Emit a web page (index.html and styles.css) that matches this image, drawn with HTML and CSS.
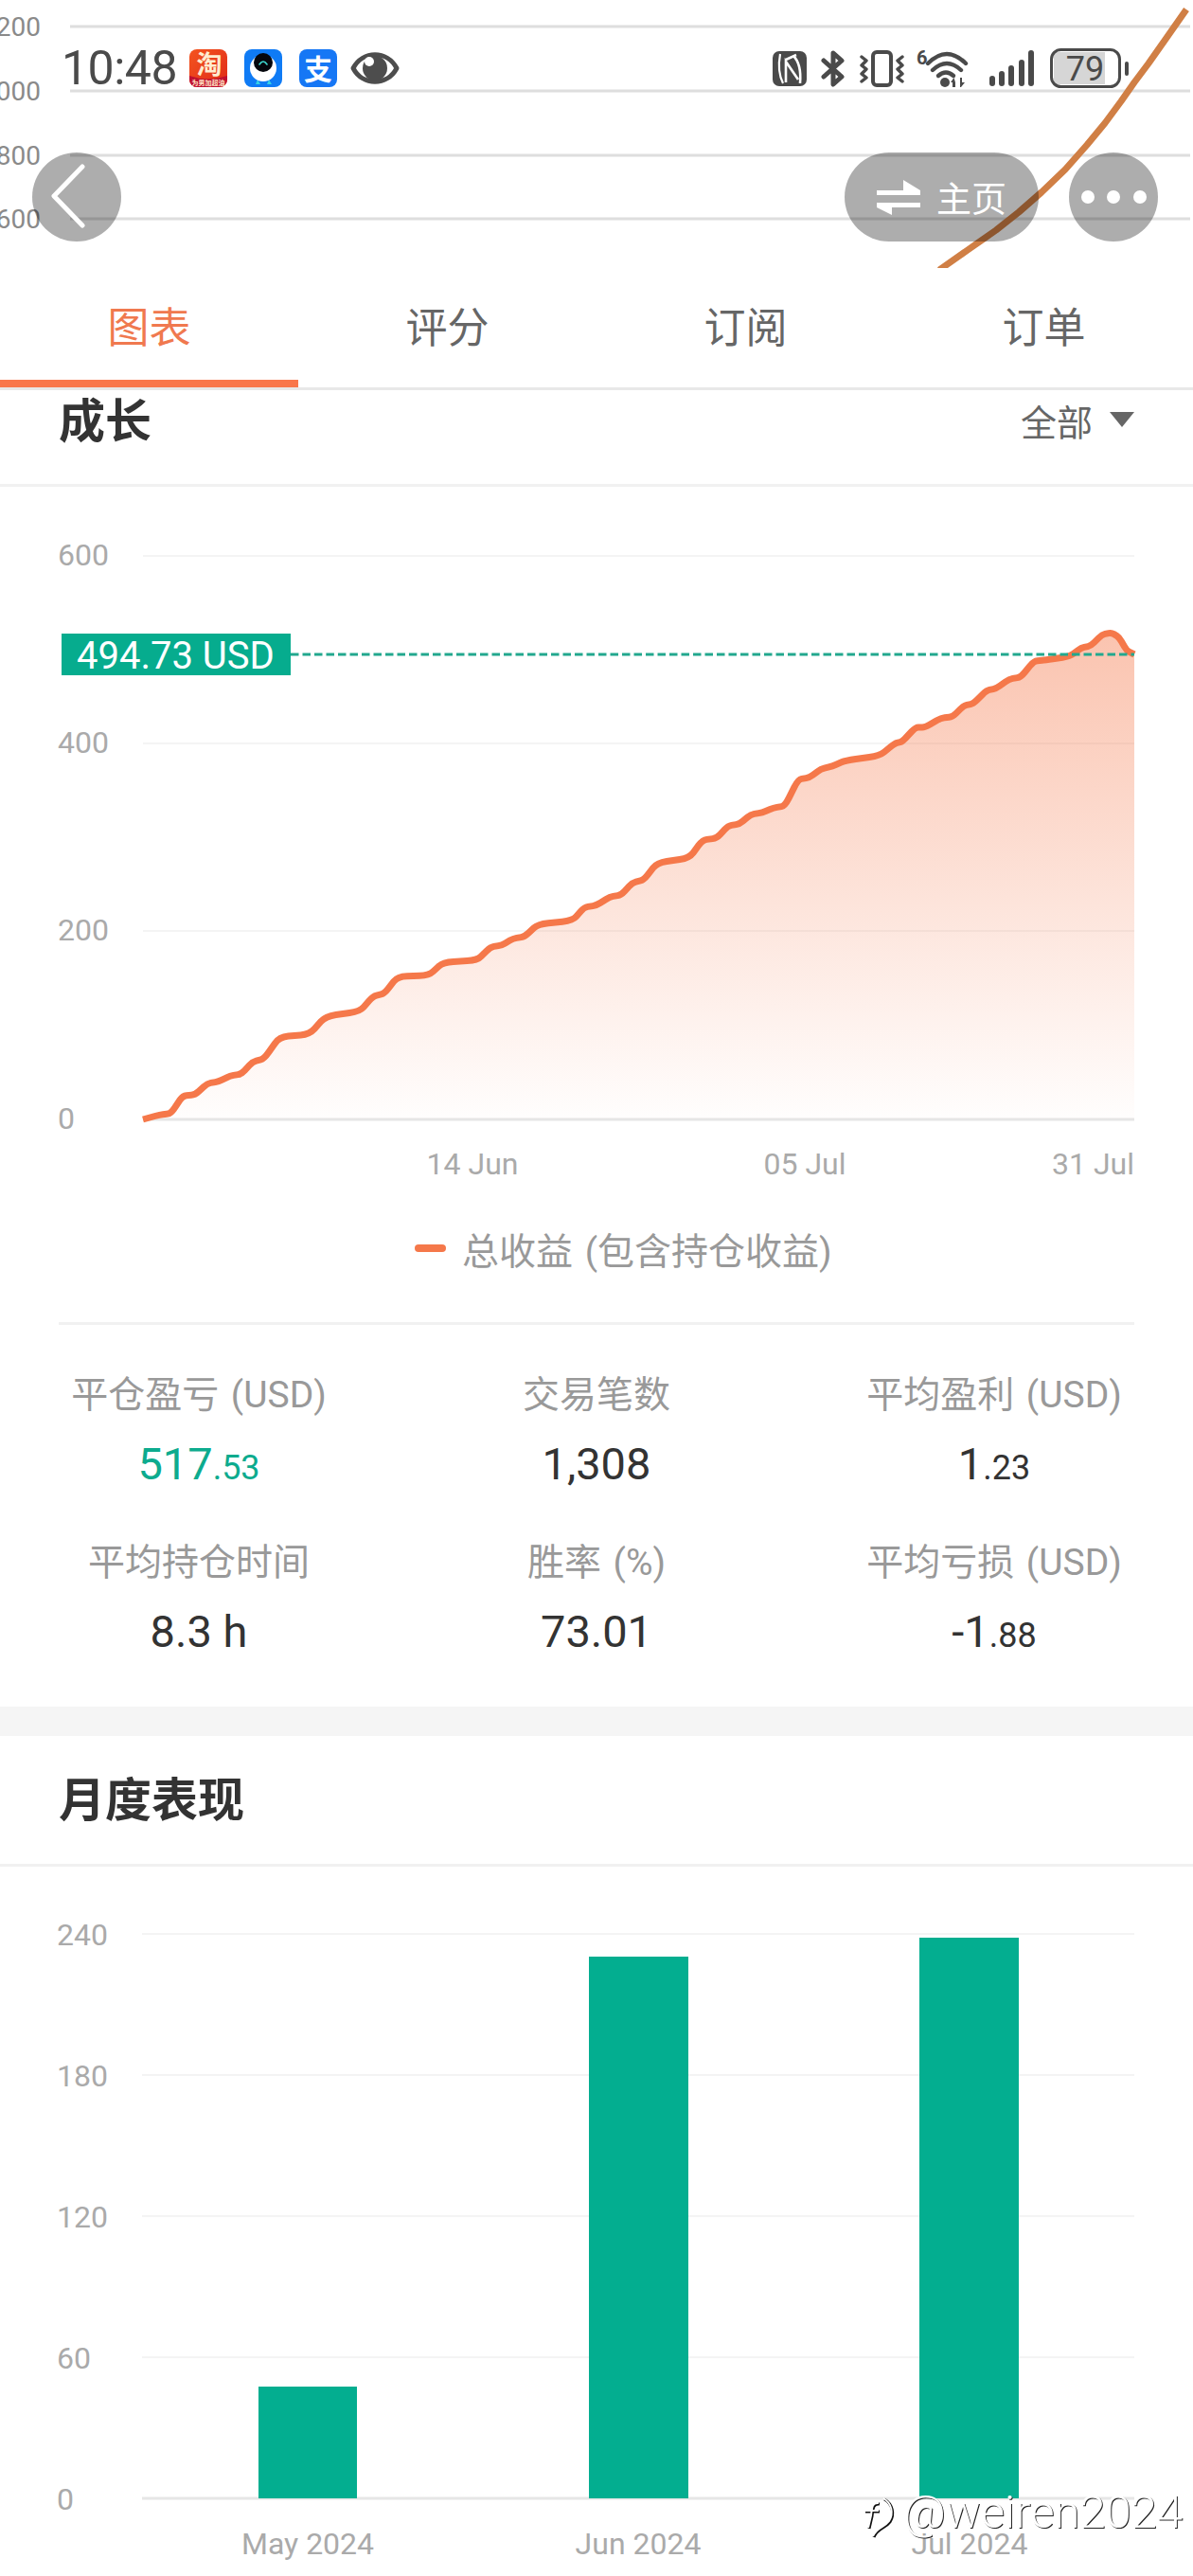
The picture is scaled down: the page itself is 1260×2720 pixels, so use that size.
FILE: index.html
```html
<!DOCTYPE html>
<html lang="zh-CN">
<head>
  <meta charset="UTF-8" />
  <title>图表</title>
  <link rel="stylesheet" href="styles.css">
</head>
<body>
  <div class="screen">

    <header class="top">
      <svg class="backdrop" viewBox="0 0 1260 283">
        <g class="bg-grid">
          <line x1="74" y1="28" x2="1257" y2="28" />
          <line x1="74" y1="96" x2="1257" y2="96" />
          <line x1="74" y1="164" x2="1257" y2="164" />
          <line x1="74" y1="231" x2="1257" y2="231" />
        </g>
        <g class="bg-label">
          <text x="43" y="38">1200</text>
          <text x="43" y="106">1000</text>
          <text x="43" y="174">800</text>
          <text x="43" y="241">600</text>
        </g>
        <polyline class="bg-curve" points="1253,10 1232,40 1213,67 1198,87 1184,107 1167,130 1148,153 1125,179 1100,203 1076,224 1052,243 1022,264 992,285" />
      </svg>

      <div class="status-bar">
        <span class="clock">10:48</span>
        <svg class="ic ic-taobao" viewBox="0 0 40 40">
          <defs>
            <linearGradient id="tbBg" x1="0" y1="0" x2="1" y2="1">
              <stop offset="0" stop-color="#f4541f" />
              <stop offset="1" stop-color="#df2a18" />
            </linearGradient>
          </defs>
          <rect width="40" height="40" rx="8" fill="url(#tbBg)" />
          <path d="M0 28 Q20 35 40 28 V32 A8 8 0 0 1 32 40 H8 A8 8 0 0 1 0 32 Z" fill="#bf1030" />
          <text class="tb-big" x="21" y="26">淘</text>
          <text class="tb-small" x="20" y="38">为男加超油</text>
        </svg>
        <svg class="ic ic-robot" viewBox="0 0 40 40">
          <rect width="40" height="40" rx="8" fill="#0f7bf5" />
          <path d="M14 32 L12 37 H17 Z M26 32 L24 37 H29 Z" fill="#35d0e6" />
          <ellipse cx="20" cy="20" rx="14" ry="14" fill="#fff" />
          <ellipse cx="20" cy="14" rx="10" ry="10" fill="#05070d" />
          <path d="M16 16 Q20 10 24 16" fill="none" stroke="#3ed8d0" stroke-width="1.6" stroke-linecap="round" />
        </svg>
        <svg class="ic ic-alipay" viewBox="0 0 40 40">
          <rect width="40" height="40" rx="8" fill="#1677f5" />
          <text class="ali-char" x="20" y="32">支</text>
        </svg>
        <svg class="ic ic-eye" viewBox="0 0 52 36">
          <path d="M3 18 C13 -1 39 -1 49 18 C39 37 13 37 3 18 Z" fill="none" stroke="#4d4d4d" stroke-width="5" stroke-linejoin="round" />
          <circle cx="26" cy="18" r="13" fill="#4d4d4d" />
          <circle cx="20" cy="11" r="5" fill="#fff" />
        </svg>

        <svg class="ic ic-nfc" viewBox="0 0 36 37">
          <rect width="36" height="37" rx="7" fill="#4a4a4a" />
          <path d="M8 3 C6 14 6 24 11 34" fill="none" stroke="#fff" stroke-width="2.2" />
          <path d="M14 33 V11 L27 30 M22 5 C29 12 30 22 29 34 M14 9 L25 4" fill="none" stroke="#fff" stroke-width="2.6" />
        </svg>
        <svg class="ic ic-bt" viewBox="0 0 26 39">
          <path d="M3 11 L22 28 L13 36 V3 L22 11 L3 28" fill="none" stroke="#4a4a4a" stroke-width="5" stroke-linejoin="round" stroke-linecap="round" />
        </svg>
        <svg class="ic ic-vibrate" viewBox="0 0 47 39">
          <rect x="14" y="2" width="19" height="35" rx="4" fill="none" stroke="#4a4a4a" stroke-width="4" />
          <path d="M2 7 L7 11 L2 16 L7 20 L2 25 L7 29 L2 33" fill="none" stroke="#4a4a4a" stroke-width="3.4" stroke-linejoin="round" stroke-linecap="round" />
          <path d="M45 7 L40 11 L45 16 L40 20 L45 25 L40 29 L45 33" fill="none" stroke="#4a4a4a" stroke-width="3.4" stroke-linejoin="round" stroke-linecap="round" />
        </svg>
        <svg class="ic ic-wifi" viewBox="0 0 56 40">
          <text class="wifi-six" x="0" y="16">6</text>
          <g fill="none" stroke="#4a4a4a" stroke-width="4.4" stroke-linecap="round">
            <path d="M12 15 Q32 -5 52 15" />
            <path d="M17 22 Q32 8 47 22" />
            <path d="M23 28 Q31 21 39 28" />
          </g>
          <circle cx="30" cy="35" r="5" fill="#4a4a4a" />
          <path d="M38 40 V35 H36 L39.500 30 L41 35 V40 Z M46 30 H48 V35 H51 L47 40 L46 40 Z" fill="#4a4a4a" />
        </svg>
        <svg class="ic ic-signal" viewBox="0 0 49 38">
          <g stroke="#4a4a4a" stroke-width="6" stroke-linecap="round">
            <line x1="4" y1="30" x2="4" y2="35" />
            <line x1="14" y1="25" x2="14" y2="35" />
            <line x1="24" y1="19" x2="24" y2="35" />
            <line x1="35" y1="13" x2="35" y2="35" />
            <line x1="45" y1="3" x2="45" y2="35" />
          </g>
        </svg>
        <svg class="ic ic-battery" viewBox="0 0 83 42">
          <rect x="4" y="4" width="54" height="34" fill="#d6d6d6" />
          <rect x="1.500" y="1.500" width="72" height="39" rx="10" fill="none" stroke="#4a4a4a" stroke-width="3" />
          <rect x="79" y="14" width="4" height="15" rx="2" fill="#4a4a4a" />
          <text class="batt-num" x="37" y="34">79</text>
        </svg>
      </div>

      <div class="nav-row">
        <div class="round-btn">
          <svg class="back-ic" viewBox="0 0 40 70">
            <path d="M34 3 L4 34 L34 65" fill="none" stroke="#fff" stroke-width="5" stroke-linecap="round" stroke-linejoin="round" />
          </svg>
        </div>
        <div class="home-pill">
          <svg class="swap-ic" viewBox="0 0 46 37">
            <path d="M0 11 H28 V0 L46 11 V16 H0 Z M46 29 H16 V37 L0 29 V24 H46 Z" fill="#fff" />
          </svg>
          <span>主页</span>
        </div>
        <div class="round-btn more-btn">
          <i class="dot"></i><i class="dot"></i><i class="dot"></i>
        </div>
      </div>
    </header>

    <nav class="tabs">
      <div class="tab active">图表</div>
      <div class="tab">评分</div>
      <div class="tab">订阅</div>
      <div class="tab">订单</div>
    </nav>

    <div class="section-head growth-head">
      <h2>成长</h2>
      <div class="filter">全部<span class="caret"></span></div>
    </div>

    <svg class="growth-chart" viewBox="0 514 1260 746">
      <defs>
        <linearGradient id="areaFill" gradientUnits="userSpaceOnUse" x1="0" y1="668" x2="0" y2="1182">
          <stop offset="0" stop-color="#f5784a" stop-opacity=".44" />
          <stop offset="1" stop-color="#f5784a" stop-opacity=".01" />
        </linearGradient>
      </defs>
      <line class="grid" x1="151" y1="587" x2="1198" y2="587" />
      <line class="grid" x1="151" y1="785" x2="1198" y2="785" />
      <line class="grid" x1="151" y1="983" x2="1198" y2="983" />
      <line class="axis" x1="151" y1="1182" x2="1198" y2="1182" />
      <text class="tick" x="61" y="597">600</text>
      <text class="tick" x="61" y="795">400</text>
      <text class="tick" x="61" y="993">200</text>
      <text class="tick" x="61" y="1192">0</text>
      <path id="growthArea" fill="url(#areaFill)" />
      <path id="growthLine" class="growth-line" />
      <line class="level" x1="307" y1="691" x2="1198" y2="691" />
      <rect class="level-tag" x="65" y="669" width="242" height="44" />
      <text class="level-text" x="81" y="706">494.73 USD</text>
      <text class="tick mid" x="499" y="1240">14 Jun</text>
      <text class="tick mid" x="850" y="1240">05 Jul</text>
      <text class="tick end" x="1198" y="1240">31 Jul</text>
    </svg>

    <div class="legend">
      <span class="legend-mark"></span>
      <span>总收益 (包含持仓收益)</span>
    </div>
    <div class="rule"></div>

    <section class="stats">
      <div class="stat">
        <div class="stat-label">平仓盈亏 (USD)</div>
        <div class="stat-value up">517<small>.53</small></div>
      </div>
      <div class="stat">
        <div class="stat-label">交易笔数</div>
        <div class="stat-value">1,308</div>
      </div>
      <div class="stat">
        <div class="stat-label">平均盈利 (USD)</div>
        <div class="stat-value">1<small>.23</small></div>
      </div>
      <div class="stat">
        <div class="stat-label">平均持仓时间</div>
        <div class="stat-value">8.3 h</div>
      </div>
      <div class="stat">
        <div class="stat-label">胜率 (%)</div>
        <div class="stat-value">73.01</div>
      </div>
      <div class="stat">
        <div class="stat-label">平均亏损 (USD)</div>
        <div class="stat-value">-1<small>.88</small></div>
      </div>
    </section>

    <div class="band"></div>

    <div class="section-head monthly-head">
      <h2>月度表现</h2>
    </div>

    <svg class="monthly-chart" viewBox="0 1971 1260 749">
      <line class="grid" x1="150" y1="2042" x2="1198" y2="2042" />
      <line class="grid" x1="150" y1="2191" x2="1198" y2="2191" />
      <line class="grid" x1="150" y1="2340" x2="1198" y2="2340" />
      <line class="grid" x1="150" y1="2489" x2="1198" y2="2489" />
      <line class="axis" x1="150" y1="2638" x2="1198" y2="2638" />
      <text class="tick" x="60" y="2054">240</text>
      <text class="tick" x="60" y="2203">180</text>
      <text class="tick" x="60" y="2352">120</text>
      <text class="tick" x="60" y="2501">60</text>
      <text class="tick" x="60" y="2650">0</text>
      <rect class="bar" x="273" y="2520" width="104" height="118" />
      <rect class="bar" x="622" y="2066" width="105" height="572" />
      <rect class="bar" x="971" y="2046" width="105" height="592" />
      <text class="tick mid" x="325" y="2697">May 2024</text>
      <text class="tick mid" x="674" y="2697">Jun 2024</text>
      <text class="tick mid" x="1024" y="2697">Jul 2024</text>
    </svg>

    <div class="watermark">
      <svg class="wm-logo" viewBox="0 0 38 46">
        <g fill="none" stroke="#111" stroke-width="3">
          <path d="M26 4 C35 9 37 20 32 28 C27 35 19 34 15 44" />
          <path d="M21 9 C14 8 14 14 13 22 L10 35 M6 17 H21" />
        </g>
        <g fill="none" stroke="#fff" stroke-width="2">
          <path d="M25 3 C34 8 36 19 31 27 C26 34 18 33 14 43" />
          <path d="M20 8 C13 7 13 13 12 21 L9 34 M5 16 H20" />
        </g>
      </svg>
      <span>@weiren2024</span>
    </div>
  </div>

  <script>
    // total profit curve, in page coordinates
    const points = [
      [151,1182],[169,1177],[179,1176],[183,1172],[193,1157],[206,1156],[219,1144],[231,1142],
      [243,1136],[255,1134],[267,1121],[279,1118],[295,1095],[327,1092],[344,1073],[380,1068],
      [394,1052],[406,1049],[420,1031],[453,1030],[468,1016],[504,1014],[518,1000],[530,998],
      [542,991],[554,989],[568,976],[605,972],[617,958],[630,956],[644,947],[656,945],
      [668,932],[680,929],[694,911],[728,906],[742,887],[757,885],[769,872],[781,870],
      [793,860],[805,858],[817,853],[829,851],[843,823],[855,821],[867,812],[879,809],
      [893,803],[929,798],[945,785],[953,783],[967,768],[977,768],[994,758],[1006,757],
      [1018,745],[1028,743],[1042,729],[1052,727],[1066,717],[1078,715],[1092,698],[1104,697],
      [1130,693],[1142,684],[1152,682],[1164,670],[1174,668],[1182,673],[1190,687],[1198,691]
    ];

    // round each corner a little, the steps of the curve have to stay visible
    const ROUND = 0.3;
    let d = `M${points[0][0]} ${points[0][1]}`;
    for (let i = 1; i < points.length - 1; i++) {
      const [x, y] = points[i];
      const [px, py] = points[i - 1];
      const [nx, ny] = points[i + 1];
      d += ` L${x + (px - x) * ROUND} ${y + (py - y) * ROUND}`;
      d += ` Q${x} ${y} ${x + (nx - x) * ROUND} ${y + (ny - y) * ROUND}`;
    }
    d += ' L1198 691';

    document.getElementById('growthLine').setAttribute('d', d);
    document.getElementById('growthArea').setAttribute('d', d + ' L1198 1182 L151 1182 Z');
  </script>
</body>
</html>
```

FILE: styles.css
```css
* {
  box-sizing: border-box;
}
html, body {
  margin: 0;
  padding: 0;
  background-color: white;
}
body {
  font-family: Roboto, "Noto Sans CJK SC", sans-serif;
  color: #333;
}
svg {
  display: block;
}
.screen {
  position: relative;
  width: 1260px;
  height: 2720px;
  overflow: hidden;
}

/* top area: chart behind, status bar and buttons over it */
.top {
  position: relative;
  height: 285px;
  padding-top: 51px;
}
.backdrop {
  position: absolute;
  left: 0;
  top: 0;
  width: 1260px;
  height: 283px;
}
.bg-grid line {
  stroke: #dedede;
  stroke-width: 3;
}
.bg-label text {
  font-size: 28px;
  fill: #8a8a8a;
  text-anchor: end;
}
.bg-curve {
  fill: none;
  stroke: #d07f45;
  stroke-width: 7;
  stroke-linejoin: round;
}
.status-bar {
  position: relative;
  display: flex;
  align-items: center;
  height: 42px;
  padding-left: 65px;
}
.clock {
  width: 119px;
  font-size: 50px;
  line-height: 42px;
  color: #4a4a4a;
  letter-spacing: -0.5px;
  white-space: nowrap;
}
.ic {
  flex: none;
}
.ic-taobao {
  width: 40px;
  height: 40px;
  margin-left: 16px;
}
.ic-robot {
  width: 40px;
  height: 40px;
  margin-left: 18px;
}
.ic-alipay {
  width: 40px;
  height: 40px;
  margin-left: 18px;
}
.ic-eye {
  width: 52px;
  height: 36px;
  margin-left: 14px;
}
.ic-nfc {
  width: 36px;
  height: 37px;
  margin-left: 394px;
}
.ic-bt {
  width: 26px;
  height: 39px;
  margin-left: 15px;
}
.ic-vibrate {
  width: 47px;
  height: 39px;
  margin-left: 15px;
}
.ic-wifi {
  width: 56px;
  height: 40px;
  margin-left: 13px;
}
.ic-signal {
  width: 49px;
  height: 38px;
  margin-left: 20px;
}
.ic-battery {
  width: 83px;
  height: 42px;
  margin-left: 16px;
}
.tb-big {
  font-size: 27px;
  font-weight: 700;
  fill: #ffeccf;
  text-anchor: middle;
}
.tb-small {
  font-size: 7px;
  font-weight: 700;
  fill: #ffe3c4;
  text-anchor: middle;
}
.ali-char {
  font-size: 30px;
  font-weight: 700;
  fill: white;
  text-anchor: middle;
}
.wifi-six {
  font-size: 20px;
  font-weight: 700;
  fill: #4a4a4a;
}
.batt-num {
  font-size: 36px;
  fill: #4a4a4a;
  text-anchor: middle;
}

.nav-row {
  position: relative;
  display: flex;
  align-items: center;
  height: 94px;
  margin-top: 68px;
  padding: 0 37px 0 34px;
}
.round-btn {
  display: flex;
  align-items: center;
  justify-content: center;
  width: 94px;
  height: 94px;
  border-radius: 50%;
  background-color: rgba(0,0,0,0.32);
}
.back-ic {
  width: 40px;
  height: 70px;
  margin-right: 16px;
}
.home-pill {
  display: flex;
  align-items: center;
  justify-content: center;
  gap: 17px;
  width: 205px;
  height: 94px;
  margin-left: auto;
  border-radius: 47px;
  background-color: rgba(0,0,0,0.32);
  color: white;
  font-size: 37px;
}
.swap-ic {
  width: 46px;
  height: 37px;
}
.more-btn {
  gap: 13.5px;
  margin-left: 32px;
}
.dot {
  width: 14px;
  height: 14px;
  border-radius: 50%;
  background-color: white;
}

/* tabs */
.tabs {
  display: grid;
  grid-template-columns: repeat(4, 1fr);
  height: 127px;
  border-bottom: 3px solid #e8e8e8;
}
.tab {
  position: relative;
  text-align: center;
  font-size: 44px;
  line-height: 124px;
  color: #666;
}
.tab.active {
  color: #f0794f;
}
.tab.active::after {
  content: "";
  position: absolute;
  left: 0;
  right: 0;
  bottom: 0;
  height: 8px;
  background-color: #f9774b;
}

/* section headings */
.section-head {
  display: flex;
  justify-content: space-between;
  border-bottom: 3px solid #f1f1f1;
  padding: 0 62px;
}
.section-head h2 {
  margin: 0;
  font-size: 49px;
  font-weight: 700;
  line-height: 64px;
  color: #333;
}
.growth-head {
  height: 102px;
  padding-top: 2px;
}
.monthly-head {
  height: 138px;
  padding-top: 37px;
}
.filter {
  display: flex;
  align-items: center;
  gap: 18px;
  height: 58px;
  font-size: 38px;
  color: #666;
}
.caret {
  width: 0;
  height: 0;
  border-left: 13px solid transparent;
  border-right: 13px solid transparent;
  border-top: 16px solid #666;
}

/* charts */
.growth-chart {
  width: 1260px;
  height: 746px;
}
.monthly-chart {
  width: 1260px;
  height: 749px;
}
.grid {
  stroke: #f4f4f4;
  stroke-width: 2;
}
.axis {
  stroke: #e6e6e6;
  stroke-width: 3;
}
.tick {
  font-size: 32px;
  fill: #aaa;
}
.tick.mid {
  text-anchor: middle;
}
.tick.end {
  text-anchor: end;
}
.growth-line {
  fill: none;
  stroke: #f5784a;
  stroke-width: 7;
  stroke-linejoin: round;
}
.level {
  stroke: #22a88e;
  stroke-width: 3;
  stroke-dasharray: 8.500 4;
}
.level-tag {
  fill: #06ac8e;
}
.level-text {
  font-size: 40px;
  fill: white;
}
.bar {
  fill: #03ae90;
}

.legend {
  display: flex;
  align-items: center;
  gap: 17px;
  height: 116px;
  margin-bottom: 20px;
  padding-left: 438px;
  font-size: 39px;
  word-spacing: 3px;
  color: #999;
}
.legend-mark {
  width: 33px;
  height: 8px;
  border-radius: 4px;
  background-color: #f5784a;
}
.rule {
  height: 3px;
  margin: 0 62px;
  background-color: #f1f1f1;
}

/* numbers under the chart */
.stats {
  display: grid;
  grid-template-columns: repeat(3, 420px);
  row-gap: 49px;
  padding: 49px 0;
  text-align: center;
}
.stat-label {
  font-size: 39px;
  word-spacing: 3px;
  line-height: 50px;
  color: #999;
}
.stat-value {
  margin-top: 18px;
  font-size: 47px;
  font-weight: 450;
  line-height: 60px;
  color: #333;
}
.stat-value small {
  font-size: 36px;
  line-height: 1;
}
.stat-value.up {
  color: #0dab8e;
}
.band {
  height: 31px;
  background-color: #f5f5f5;
}

/* watermark lies over the last chart */
.watermark {
  position: absolute;
  left: 908px;
  top: 2629px;
  display: flex;
  gap: 8px;
  font-size: 49px;
  font-weight: 300;
  line-height: 48px;
  color: white;
  text-shadow: 1px 1px 0 #222;
}
.wm-logo {
  width: 38px;
  height: 46px;
  margin-top: 6px;
}
```
